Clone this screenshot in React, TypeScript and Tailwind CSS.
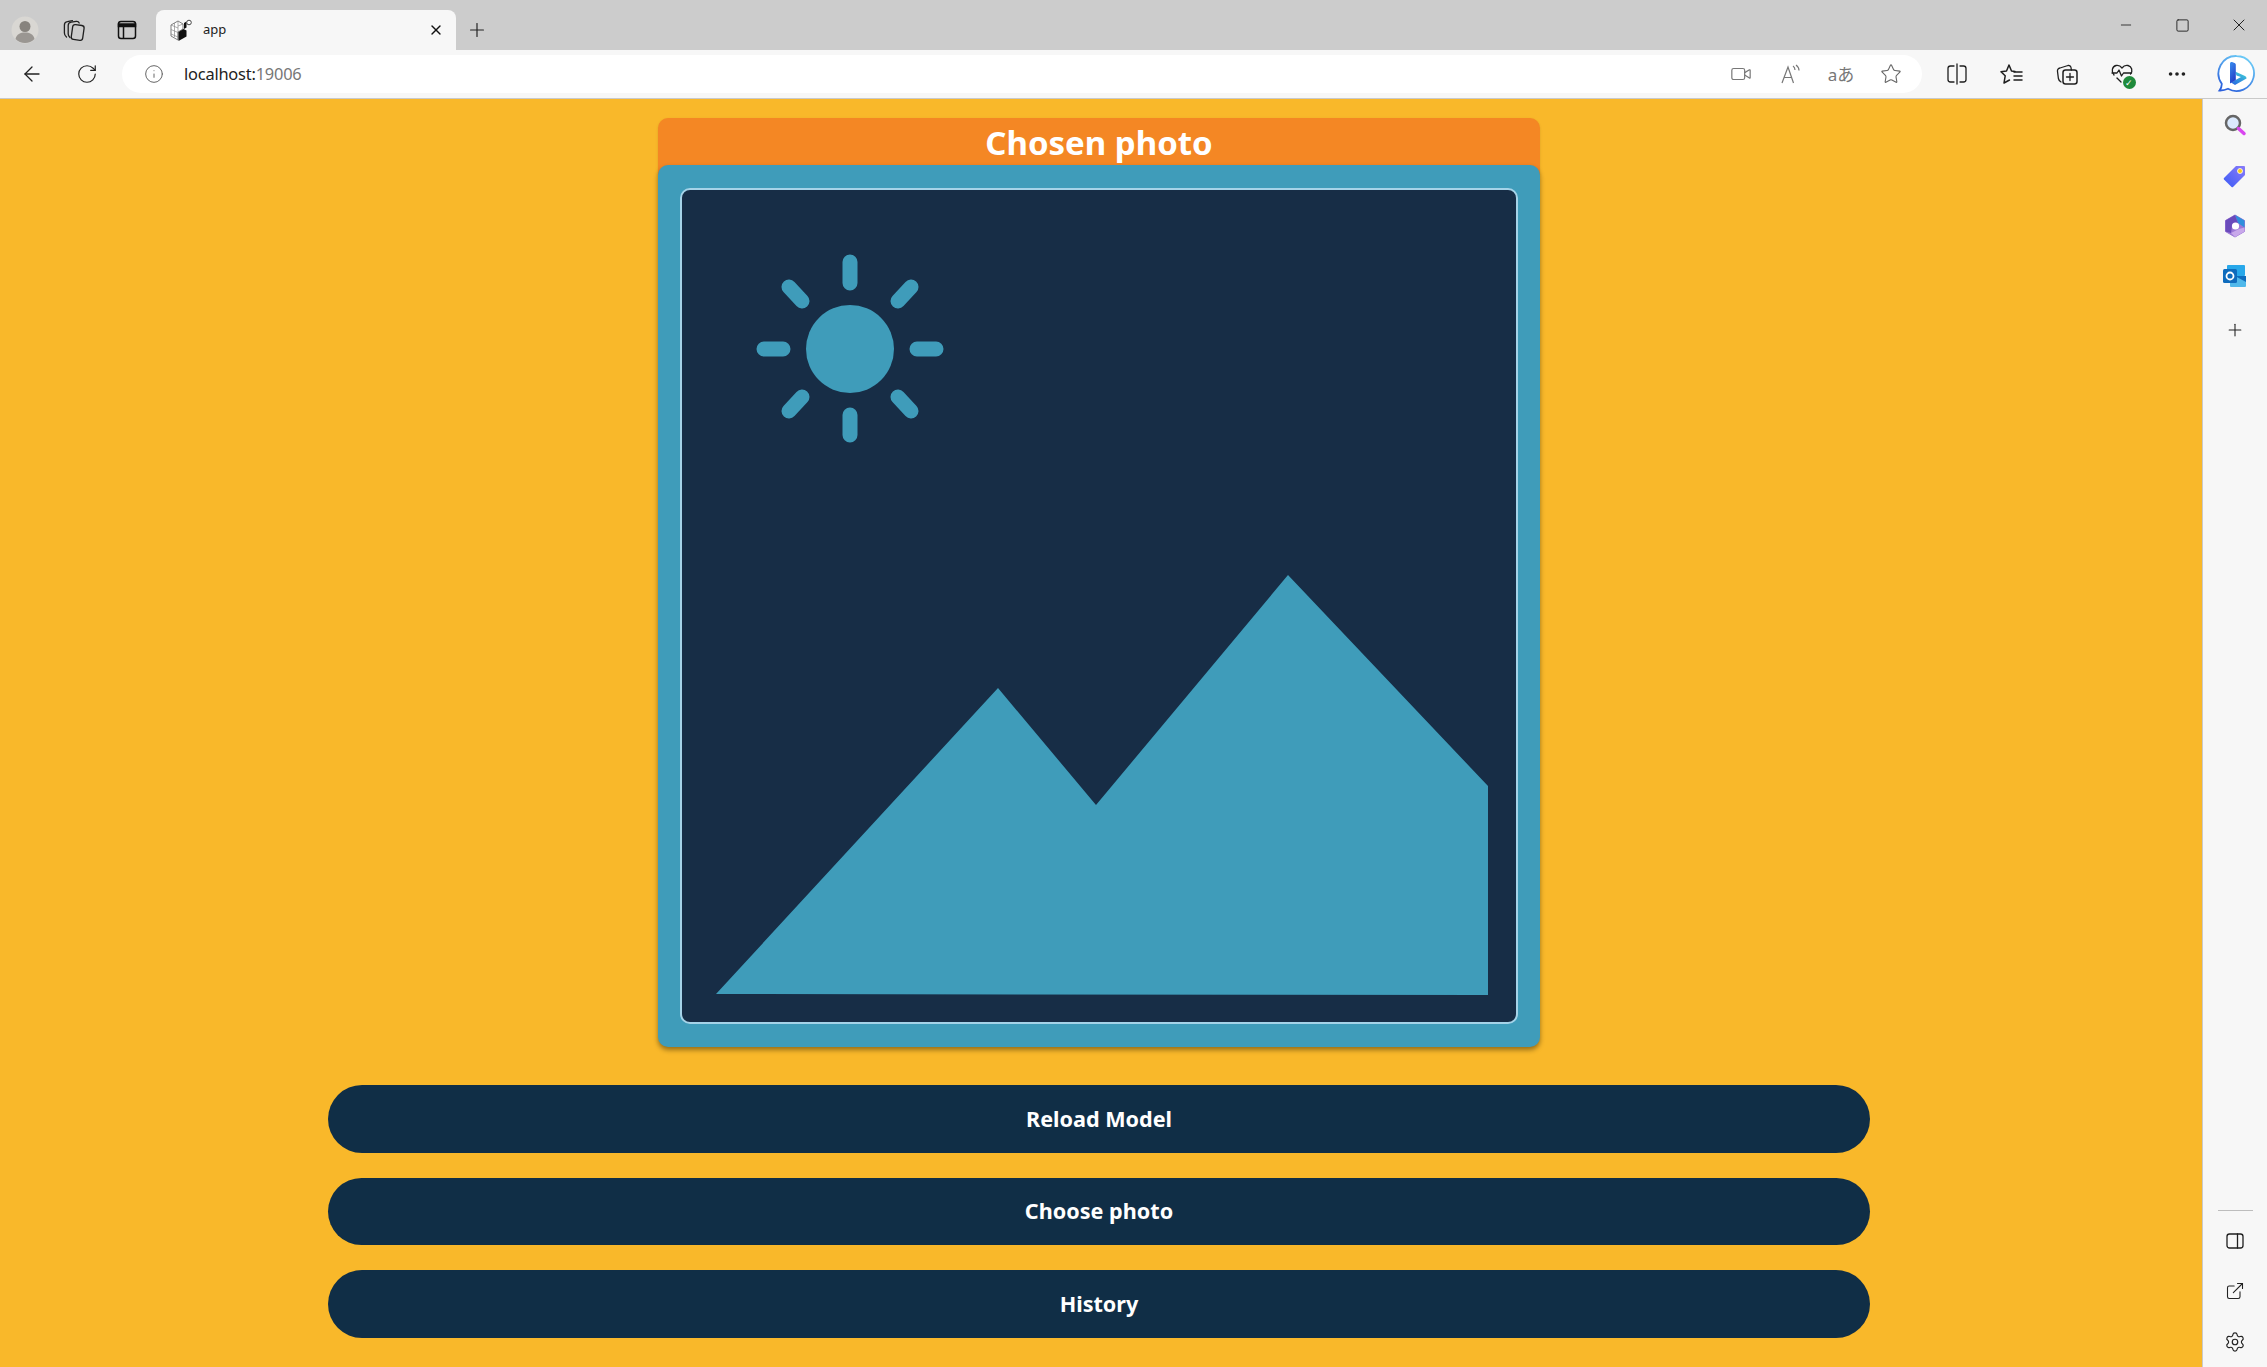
import { ArrowLeft, Info, MoreHorizontal, Plus, RotateCw, Settings, Star, Video, X, Minus, Square, ExternalLink } from 'lucide-react';
import type { ReactNode } from 'react';

const uiFont = "font-['Noto_Sans','Open_Sans',sans-serif]";

function Slot({ className, children }: { className: string; children: ReactNode }) {
  return <div className={`flex h-full shrink-0 items-center justify-center ${className}`}>{children}</div>;
}

function TabFavicon() {
  return (
    <svg width="24" height="24" viewBox="0 0 24 24" fill="none">
      {/* white cube grid */}
      <path d="M2 7l7-4 5 3v5l-5 3v8l-7-4z" fill="#fff" stroke="#6f6f6f" strokeWidth="0.900" />
      <path d="M2 11.500l7 3M2 16l7 3M9 3v18M5.500 5v14M9 8l5-2M2 7l7 3" stroke="#8a8a8a" strokeWidth="0.700" />
      {/* dark blocks */}
      <path d="M9.500 14l5-3 3 1.500v6L9.500 23z" fill="#111" />
      <path d="M15 5l2.500-1.500v6L15 11z" fill="#111" />
      <circle cx="20" cy="4.500" r="2.300" fill="#fff" stroke="#444" strokeWidth="1" />
    </svg>
  );
}

function BingLogo() {
  return (
    <svg width="40" height="40" viewBox="0 0 40 40" fill="none">
      <defs>
        <linearGradient id="bingRing" x1="0.800" y1="0" x2="0.200" y2="1">
          <stop offset="0" stopColor="#6fd0f7" />
          <stop offset="1" stopColor="#2a5fdc" />
        </linearGradient>
        <linearGradient id="bingStem" x1="0" y1="0" x2="0.400" y2="1">
          <stop offset="0" stopColor="#3a8ff0" />
          <stop offset="1" stopColor="#2340c8" />
        </linearGradient>
        <linearGradient id="bingBowl" x1="0.800" y1="0" x2="0.200" y2="1">
          <stop offset="0" stopColor="#3fd0d8" />
          <stop offset="1" stopColor="#2a6ae0" />
        </linearGradient>
      </defs>
      <path d="M20.500 2a17.500 17.500 0 1 1-8.500 32.800c-2.500 1.200-5.500 1.800-8.500 1.700 1.500-2 2.400-4.200 2.300-6.800A17.500 17.500 0 0 1 20.500 2z" fill="#fff" stroke="url(#bingRing)" strokeWidth="1.800" />
      <path d="M19 17.500l10 4.500c1 .5 1.500 1.500 1.500 2.500L19 31l-4-2.500 10-5.500-4.500-1.500z" fill="url(#bingBowl)" />
      <path d="M14 9.500c0-1.200 1-1.800 2-1.500l2.500 1c.8.300 1.300 1 1.300 1.800V26l-5.800 3.500z" fill="url(#bingStem)" />
    </svg>
  );
}

function SearchApp() {
  return (
    <svg width="24" height="24" viewBox="0 0 24 24" fill="none">
      <circle cx="10" cy="10" r="7" fill="#dbeafe" stroke="#666" strokeWidth="2.500" />
      <path d="M15.500 15.500l5.500 5" stroke="#d946ef" strokeWidth="3.500" strokeLinecap="round" />
    </svg>
  );
}

function TagApp() {
  return (
    <svg width="24" height="24" viewBox="0 0 24 24" fill="none">
      <defs>
        <linearGradient id="tagFill" x1="0" y1="1" x2="1" y2="0">
          <stop offset="0" stopColor="#3b5bf6" />
          <stop offset="1" stopColor="#8a7cf8" />
        </linearGradient>
      </defs>
      <path d="M13 2h8a1 1 0 0 1 1 1v8L10 23a1 1 0 0 1-1.400 0L1 15.400A1 1 0 0 1 1 14z" fill="url(#tagFill)" />
      <circle cx="17" cy="7" r="2.500" fill="#facc15" stroke="#fff" strokeWidth="0.800" />
    </svg>
  );
}

function CopilotApp() {
  return (
    <svg width="24" height="24" viewBox="0 0 24 24" fill="none">
      <path d="M12 1l9.500 5.500v11L12 23l-9.500-5.500v-11z" fill="#9d78d6" stroke="#9d78d6" strokeWidth="1" strokeLinejoin="round" />
      <path d="M12 1l9.500 5.500v7L15 9z" fill="#2f8fdc" />
      <path d="M2.500 6.500L12 1l3 8-6 3-1 7-5.500-1.500z" fill="#6a4bbb" />
      <path d="M8 19l8-4 5.500-1.500v4L12 23z" fill="#c8a8ea" />
      <circle cx="12.500" cy="12" r="3.600" fill="#fff" />
    </svg>
  );
}

function OutlookApp() {
  return (
    <svg width="24" height="24" viewBox="0 0 24 24" fill="none">
      <rect x="4" y="1" width="18" height="11" rx="1" fill="#28a8ea" />
      <path d="M7 12h16v10a1 1 0 0 1-1 1H8a1 1 0 0 1-1-1z" fill="#50b8ea" />
      <path d="M12 12l11 6v-6z" fill="#0f6cbd" />
      <rect x="0" y="5" width="14" height="14" rx="1.500" fill="#0f6cbd" />
      <circle cx="7" cy="12" r="3.500" stroke="#fff" strokeWidth="1.800" />
    </svg>
  );
}

const line = { fill: 'none', stroke: '#1f1f1f', strokeWidth: 1.300, strokeLinecap: 'round', strokeLinejoin: 'round' } as const;

function App() {
  return (
    <div className={`flex h-[1367px] w-[2267px] flex-col overflow-hidden bg-[#f7f7f7] ${uiFont}`}>
      {/* tab strip */}
      <div className="flex h-[50px] shrink-0 bg-[#cccccc]">
        <div className="mt-[10px] flex h-[40px]">
          <Slot className="w-[50px]">
            <svg width="28" height="28" viewBox="0 0 28 28">
              <circle cx="14" cy="14" r="13.500" fill="#d9d7d3" />
              <circle cx="14" cy="10.500" r="5.500" fill="#87837e" />
              <path d="M4.500 23c1-5 5-6.500 9.500-6.500s8.500 1.500 9.500 6.500a13.500 13.500 0 0 1-19 0z" fill="#9a9692" />
            </svg>
          </Slot>
          <Slot className="w-[48px]">
            {/* workspaces: three stacked cards */}
            <svg width="24" height="24" viewBox="0 0 24 24" {...line}>
              <rect x="10" y="7" width="11.500" height="15" rx="2.500" transform="rotate(8 16 14)" />
              <path d="M8 19.500C6.800 18.500 6.200 17.500 6.200 16V7.500c0-2 1-3 3-3.300l5-.8c1.500-.2 2.500.4 3 1.600" />
              <path d="M4.500 19C3 17.800 2.400 16.500 2.400 15V7c0-2 1-3 3-3.300l5-1" />
            </svg>
          </Slot>
          <Slot className="w-[58px]">
            <svg width="20" height="20" viewBox="0 0 20 20" fill="none" stroke="#111" strokeWidth="1.500">
              <rect x="1.500" y="1.500" width="17" height="17" rx="2.500" />
              <path d="M1.500 4h17v2.500h-17z" fill="#111" />
              <path d="M6.500 6v12" />
            </svg>
          </Slot>
          <div className="flex w-[300px] shrink-0 items-center rounded-t-lg bg-[#f7f7f7] pl-[13px] pr-[12px]">
            <TabFavicon />
            <span className="ml-[10px] text-[13px] text-[#222]">app</span>
            <X className="ml-auto" size={16} color="#111" strokeWidth={2} />
          </div>
          <Slot className="w-[42px]">
            <Plus size={22} color="#222" strokeWidth={1.300} />
          </Slot>
        </div>
        <div className="flex-1" />
        <Slot className="w-[57px]">
          <Minus size={16} color="#222" strokeWidth={1.300} />
        </Slot>
        <Slot className="w-[57px]">
          <Square size={15} color="#222" strokeWidth={1.500} />
        </Slot>
        <Slot className="w-[56px]">
          <X size={20} color="#222" strokeWidth={1.200} />
        </Slot>
      </div>

      {/* toolbar */}
      <div className="flex h-[49px] shrink-0 border-b border-[#c9c9c9] pb-[5px] pt-[5px]">
        <Slot className="w-[63px]">
          <ArrowLeft size={24} color="#222" strokeWidth={1.300} />
        </Slot>
        <Slot className="w-[47px]">
          <RotateCw size={22} color="#222" strokeWidth={1.300} />
        </Slot>
        <div className="ml-[12px] flex h-[38px] w-[1800px] shrink-0 items-center rounded-full bg-white pr-[6px]">
          <Info className="ml-[22px]" size={20} color="#666" strokeWidth={1.200} />
          <span className="ml-[20px] text-[16.400px] tracking-[-0.2px] text-[#222]">
            localhost:<span className="text-[#777]">19006</span>
          </span>
          <div className="flex-1" />
          <Slot className="w-[50px]">
            <Video size={22} color="#777" strokeWidth={1.300} />
          </Slot>
          <Slot className="w-[50px]">
            <svg width="22" height="22" viewBox="0 0 22 22" fill="none" stroke="#777" strokeWidth="1.200">
              <path d="M2 20L8 4l5.500 16M4 14.500h8" />
              <path d="M13 3c1.500 1 2 2.500 2 4M16 2c2 1.500 3 3.500 3 5.500" />
            </svg>
          </Slot>
          <Slot className="w-[50px]">
            <span className="text-[17px] leading-none text-[#777]">
              a<span className="font-['Noto_Sans_CJK_JP',sans-serif]">あ</span>
            </span>
          </Slot>
          <Slot className="w-[50px]">
            <Star size={22} color="#666" strokeWidth={1.200} />
          </Slot>
        </div>
        <div className="w-[7px] shrink-0" />
        <Slot className="w-[55px]">
          <svg width="22" height="22" viewBox="0 0 22 22" {...line}>
            <path d="M8 3H4.500A2.500 2.500 0 0 0 2 5.500v11A2.500 2.500 0 0 0 4.500 19H8M14 3h3.500A2.500 2.500 0 0 1 20 5.500v11a2.500 2.500 0 0 1-2.500 2.500H14M11 1v20" />
          </svg>
        </Slot>
        <Slot className="w-[55px]">
          <svg width="24" height="24" viewBox="0 0 24 24" {...line} strokeWidth={1.500}>
            <path d="M15 9.500l-3.500-.5L9 3 6.500 9 1 9.800l4.200 4L4 21l5.500-3" />
            <path d="M14 10h8M14 14h8M14 18h8" />
          </svg>
        </Slot>
        <Slot className="w-[55px]">
          <svg width="24" height="24" viewBox="0 0 24 24" {...line}>
            <rect x="8" y="8" width="14" height="14" rx="2.500" strokeWidth="1.500" />
            <path d="M15 11.500v7M11.500 15h7" />
            <path d="M6 20c-1.500-.8-2.300-2-2.600-3.500L2.500 9.500a3 3 0 0 1 2.500-3.500L13 3.500a2.500 2.500 0 0 1 3 2l.4 2.500" />
          </svg>
        </Slot>
        <Slot className="w-[55px]">
          <div className="relative h-[24px] w-[24px]">
            <svg width="24" height="24" viewBox="0 0 24 24" {...line}>
              <path d="M4 13C1 9.500 2 4.500 6 3.500c2.500-.5 4.500.5 6 2.500 1.500-2 3.500-3 6-2.500 4 1 5 5.500 2.500 8.500" />
              <path d="M2 11h5l2-3 2.500 6 2-3h8" />
              <path d="M7 16l4 4" />
            </svg>
            <span className="absolute -bottom-[3px] -right-[2px] flex h-[13px] w-[13px] items-center justify-center rounded-full bg-[#1f8a3b] text-[9px] leading-none text-white">
              ✓
            </span>
          </div>
        </Slot>
        <Slot className="w-[55px]">
          <MoreHorizontal size={22} color="#222" strokeWidth={2} />
        </Slot>
        <Slot className="w-[63px]">
          <BingLogo />
        </Slot>
      </div>

      {/* page + sidebar */}
      <div className="flex min-h-0 flex-1">
        <main className="flex w-[2198px] shrink-0 flex-col items-center bg-[#f9b82a] pt-[19px]">
          <div className="w-[882px]">
            <div className="flex h-[57px] items-start justify-center rounded-t-[10px] bg-[#f48724] pt-[3px] shadow-sm">
              <h1 className="text-[33px] font-bold leading-[44px] text-white">Chosen photo</h1>
            </div>
            <div className="-mt-[10px] rounded-[10px] bg-[#3f9cba] px-[22px] py-[23px] shadow-[0_3px_5px_rgba(0,0,0,0.4)]">
              <div className="h-[836px] rounded-[10px] border-2 border-[#a5d3e8] bg-[#172d46]">
                <svg className="block h-full w-full" viewBox="682 190 834 832">
                  <g fill="none" stroke="#3f9cba" strokeWidth="15" strokeLinecap="round">
                    <path d="M850 262v21M850 415v20M764 349h19M917 349h19M789 287l13 14M911 287l-13 14M789 411l13-14M911 411l-13-14" />
                  </g>
                  <circle cx="850" cy="349" r="44" fill="#3f9cba" />
                  <path d="M716 994L998 688l98 117 192-230 200 211v209z" fill="#3f9cba" />
                </svg>
              </div>
            </div>
          </div>
          <div className="mt-[38px] flex w-[1542px] flex-col gap-[25px]">
            {['Reload Model', 'Choose photo', 'History'].map((label) => (
              <button
                key={label}
                className="h-[67.500px] rounded-full bg-[#102e46] text-[21.600px] font-bold text-white"
              >
                {label}
              </button>
            ))}
          </div>
        </main>
        <div className="w-[4px] shrink-0 bg-[#f9b82a]" />
        <aside className="flex flex-1 flex-col items-center border-l border-[#c9c9c9]">
          <div className="mt-[14px]"><SearchApp /></div>
          <div className="mt-[27px]"><TagApp /></div>
          <div className="mt-[26px]"><CopilotApp /></div>
          <div className="mt-[26px]"><OutlookApp /></div>
          <Plus className="mt-[32px]" size={20} color="#222" strokeWidth={1.300} />
          <div className="mt-auto h-px w-[35px] bg-[#bdbdbd]" />
          <svg className="mt-[20px]" width="20" height="20" viewBox="0 0 20 20" {...line}>
            <rect x="2" y="3" width="16" height="14" rx="2.500" />
            <path d="M12.500 3v14" />
          </svg>
          <ExternalLink className="mt-[30px]" size={20} color="#222" strokeWidth={1.300} />
          <Settings className="mb-[14px] mt-[30px]" size={22} color="#222" strokeWidth={1.300} />
        </aside>
      </div>
    </div>
  );
}

export default App;
